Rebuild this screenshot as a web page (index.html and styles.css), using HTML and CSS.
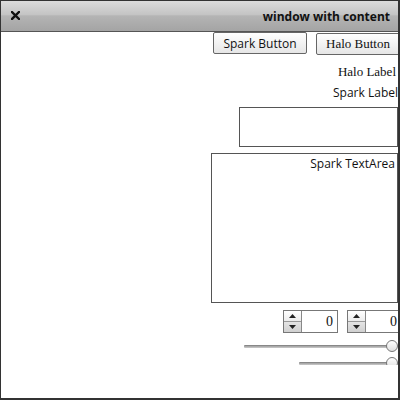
FILE: index.html
```html
<!DOCTYPE html>
<html>
<head>
<meta charset="utf-8">
<link rel="stylesheet" href="styles.css">
</head>
<body>
<div class="window">
  <div class="titlebar">
    <svg class="close" width="9" height="9" viewBox="0 0 9 9"><path d="M1 1L8 8M8 1L1 8" stroke="#111" stroke-width="2.4" stroke-linecap="square"/></svg>
    <span class="title">window with content</span>
  </div>
  <div class="content">
    <div class="btn-row">
      <button class="spark-btn">Spark Button</button>
      <button class="halo-btn">Halo Button</button>
    </div>
    <div class="halo-label">Halo Label</div>
    <div class="spark-label">Spark Label</div>
    <div class="text-input"></div>
    <div class="text-area">Spark TextArea</div>
    <div class="stepper-row">
      <div class="stepper">
        <div class="arrows">
          <div class="arrow up"><svg width="7" height="4" viewBox="0 0 7 4"><path d="M0 4L3.5 0L7 4Z" fill="#222"/></svg></div>
          <div class="arrow down"><svg width="7" height="4" viewBox="0 0 7 4"><path d="M0 0L3.5 4L7 0Z" fill="#222"/></svg></div>
        </div>
        <div class="value">0</div>
      </div>
      <div class="stepper">
        <div class="arrows">
          <div class="arrow up"><svg width="7" height="4" viewBox="0 0 7 4"><path d="M0 4L3.5 0L7 4Z" fill="#222"/></svg></div>
          <div class="arrow down"><svg width="7" height="4" viewBox="0 0 7 4"><path d="M0 0L3.5 4L7 0Z" fill="#222"/></svg></div>
        </div>
        <div class="value">0</div>
      </div>
    </div>
    <div class="slider s1"><div class="track"></div><div class="thumb"></div></div>
    <div class="slider s2"><div class="track"></div><div class="thumb"></div></div>
  </div>
</div>
</body>
</html>
```
FILE: styles.css
```css
html, body {
  margin: 0;
  padding: 0;
  background: #fff;
}
.window {
  width: 400px;
  height: 400px;
  box-sizing: border-box;
  border: 1px solid #333;
  border-right-width: 2px;
  border-bottom-width: 2px;
  display: flex;
  flex-direction: column;
  overflow: hidden;
}
.titlebar {
  flex: none;
  border-bottom: 1px solid #555;
  background: linear-gradient(#dcdcdc, #c4c4c4 45%, #b4b4b4 50%, #a4a4a4);
  display: flex;
  align-items: center;
  justify-content: space-between;
  padding: 0 8px 2px 10px;
  box-sizing: border-box;
  height: 31px;
  font-family: "Open Sans", sans-serif;
}
.close {
  display: block;
}
.title {
  font-size: 12px;
  font-weight: bold;
  color: #111;
  margin-top: 2px;
}
.content {
  flex: 1;
  display: flex;
  flex-direction: column;
  align-items: flex-end;
  overflow: hidden;
}
.btn-row {
  display: flex;
  align-items: flex-start;
  gap: 9px;
  margin-right: -2px;
}
.spark-btn, .halo-btn {
  margin: 0;
  height: 22px;
  border: 1px solid #666;
  border-radius: 2px;
  background: linear-gradient(#fff, #e6e6e6);
  color: #111;
  padding: 0 9px;
  font-size: 12px;
}
.spark-btn {
  font-family: "Open Sans", sans-serif;
  width: 94px;
}
.halo-btn {
  font-family: "Liberation Serif", serif;
  margin-top: 1px;
  width: 84px;
  font-size: 13px;
}
.halo-label {
  font-family: "Liberation Serif", serif;
  font-size: 13px;
  color: #111;
  margin-top: 8px;
  margin-right: 2px;
  line-height: 17px;
}
.spark-label {
  font-family: "Open Sans", sans-serif;
  font-size: 12px;
  color: #111;
  margin-top: 4px;
  line-height: 18px;
}
.text-input {
  width: 157px;
  height: 38px;
  border: 1px solid #555;
  margin-top: 5px;
}
.text-area {
  width: 183px;
  height: 147px;
  border: 1px solid #555;
  margin-top: 6px;
  font-family: "Open Sans", sans-serif;
  font-size: 12px;
  color: #111;
  text-align: right;
  padding: 1px 2px 0 0;
  line-height: 18px;
}
.stepper-row {
  display: flex;
  gap: 9px;
  margin-top: 7px;
  margin-right: -4px;
}
.stepper {
  width: 53px;
  height: 21px;
  border: 1px solid #777;
  display: flex;
}
.arrows {
  width: 17px;
  border-right: 1px solid #888;
  display: flex;
  flex-direction: column;
}
.arrow {
  flex: 1;
  display: flex;
  align-items: center;
  justify-content: center;
}
.arrow.up {
  background: linear-gradient(#fff, #ececec);
  border-bottom: 1px solid #999;
}
.arrow.down {
  background: linear-gradient(#e4e4e4, #d0d0d0);
}
.value {
  flex: 1;
  text-align: right;
  font-family: "Liberation Serif", serif;
  font-size: 14px;
  line-height: 21px;
  padding-right: 4px;
  color: #111;
}
.slider {
  position: relative;
  height: 12px;
}
.slider .track {
  position: absolute;
  left: 0;
  right: 0;
  top: 5px;
  height: 3px;
  background: linear-gradient(#777, #aaa 50%, #ccc);
  border-radius: 1px;
}
.slider .thumb {
  position: absolute;
  right: -6px;
  top: 0;
  width: 10px;
  height: 10px;
  border-radius: 50%;
  border: 1px solid #777;
  background: linear-gradient(#fff, #e0e0e0);
}
.s1 {
  width: 148px;
  margin-top: 7px;
  margin-right: 6px;
}
.s2 {
  width: 93px;
  height: 8px;
  margin-top: 5px;
  margin-right: 6px;
  clip-path: inset(-5px -10px 0 -10px);
}
```
